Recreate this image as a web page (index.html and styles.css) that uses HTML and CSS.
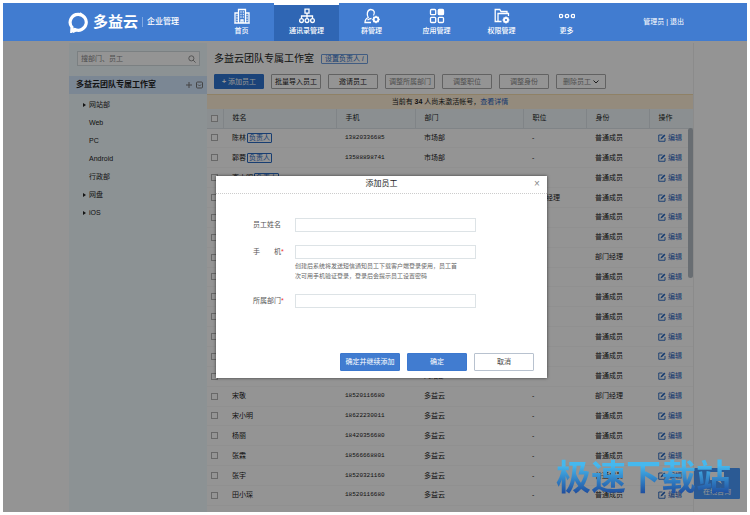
FILE: index.html
```html
<!DOCTYPE html>
<html lang="zh-CN">
<head>
<meta charset="UTF-8">
<meta name="viewport" content="width=device-width, initial-scale=1">
<title>多益云 企业管理</title>
<link rel="stylesheet" href="styles.css">
</head>
<body>
<svg class="sprite" aria-hidden="true">
<symbol id="icon-edit" viewBox="0 0 16 16"><path d="M9 2H1.500v12.500H14V8" fill="none" stroke="currentColor" stroke-width="1.800"/><path d="M5 11l.8-3L12.500 1.200l2.300 2.300L8 10.200z" fill="currentColor"/></symbol>
</svg>
<div class="app">
<header class="topbar">
<div class="logo">
<svg viewBox="0 0 20 20"><path d="M10 2.200a7.600 7.600 0 1 1-3.600 14.400L3.600 18.200l.2-3.600A7.600 7.600 0 0 1 10 2.200z" fill="none" stroke="#fff" stroke-width="3"/><path d="M12 0l3 4-4-1zM3 16l2 4 4-2z" fill="#fff"/></svg>
<span class="logo-name">多益云</span>
<span class="logo-sub">企业管理</span>
</div>
<nav class="nav">
<a href="#">
<svg viewBox="0 0 16 16"><path d="M4.500 15V1.500h7V15M4.500 5H1v10h14V5h-3.500M.2 15.200h15.600M6.500 4h1M8.800 4h1M6.500 6.500h1M8.800 6.500h1M6.500 9h1M8.800 9h1M7 15v-3h2v3M2.500 7.500h1M2.500 10h1M2.500 12.500h1M12.600 7.500h1M12.600 10h1M12.600 12.500h1"/></svg>
首页</a>
<a href="#" class="active">
<svg viewBox="0 0 16 16"><path d="M6 1.200h4v4H6zM8 5.500v5M2.500 10.500V8h11v2.500"/><circle cx="2.500" cy="12.600" r="1.900"/><circle cx="8" cy="12.600" r="1.900"/><circle cx="13.500" cy="12.600" r="1.900"/></svg>
通讯录管理</a>
<a href="#">
<svg viewBox="0 0 16 16"><path d="M7 14.500H1c0-3 1-4 3.200-5C2.500 7 3 1.500 6.800 1.500S11 5 9.500 7.500M3.500 12c1.500-1 2.500-1.500 4-1.500"/><circle cx="12" cy="11.500" r="2.300" stroke-width="1.800"/><path d="M12 7.800v1.400M12 13.800v1.400M8.300 11.500h1.400M14.300 11.500h1.500M9.400 8.900l1 1M13.600 13.100l1 1M14.600 8.900l-1 1M10.400 13.100l-1 1"/></svg>
群管理</a>
<a href="#">
<svg viewBox="0 0 16 16"><rect x="1.500" y="1.500" width="5.200" height="5.200" rx="1"/><rect x="9.300" y="1.500" width="5.200" height="5.200" rx="1" fill="#fff"/><rect x="1.500" y="9.300" width="5.200" height="5.200" rx="1"/><rect x="9.300" y="9.300" width="5.200" height="5.200" rx="1"/></svg>
应用管理</a>
<a href="#">
<svg viewBox="0 0 16 16"><path d="M7.500 13.500H1.200V1.500h4.600l1.200 2h6V6M4 13.500v-8h10.500V8"/><circle cx="12" cy="12" r="2" stroke-width="1.800"/><path d="M12 8.600v1.200M12 14.200v1.200M8.600 12h1.200M14.200 12h1.200M9.600 9.600l.8.8M13.600 13.600l.8.8M14.400 9.600l-.8.8M10.400 13.600l-.8.8"/></svg>
权限管理</a>
<a href="#">
<svg viewBox="0 0 16 16"><circle cx="2" cy="8" r="1.700"/><circle cx="8" cy="8" r="1.700"/><circle cx="14" cy="8" r="1.700"/></svg>
更多</a>
</nav>
<div class="account"><a href="#">管理员</a> | <a href="#">退出</a></div>
</header>

<div class="workspace">
<div class="panel">
<aside class="sidebar">
<div class="search">
<input type="text" placeholder="搜部门、员工" aria-label="搜部门、员工">
<svg viewBox="0 0 10 10"><circle cx="4.200" cy="4.200" r="3.200"/><path d="M6.500 6.500L9.500 9.500"/></svg>
</div>
<div class="team">
<span>多益云团队专属工作室</span>
<svg viewBox="0 0 18 8"><path d="M4 1v6M1 4h6"/><rect x="11.500" y="1" width="6" height="6" rx="1"/><path d="M13 3.500l1.500 1.500 1.500-1.500"/></svg>
</div>
<ul class="tree">
<li class="parent"><a href="#">网站部</a></li>
<li><a href="#">Web</a></li>
<li><a href="#">PC</a></li>
<li><a href="#">Android</a></li>
<li><a href="#">行政部</a></li>
<li class="parent"><a href="#">网盘</a></li>
<li class="parent"><a href="#">iOS</a></li>
</ul>
</aside>

<main class="content">
<div class="title">
<h1>多益云团队专属工作室</h1>
<button class="owner-btn">设置负责人 <i>i</i></button>
</div>
<div class="toolbar">
<button class="primary"><b>+</b> 添加员工</button>
<button>批量导入员工</button>
<button>邀请员工</button>
<button class="muted">调整所属部门</button>
<button class="muted">调整职位</button>
<button class="muted">调整身份</button>
<button class="muted">删除员工 <svg viewBox="0 0 6 4"><path d="M.5.5L3 3 5.500.5"/></svg></button>
</div>
<p class="notice">当前有 <b>34</b> 人尚未激活帐号，<a href="#">查看详情</a></p>
<div class="list">
<table>
<thead>
<tr><th class="check"><input type="checkbox" aria-label="全选"></th><th class="name">姓名</th><th class="phone">手机</th><th class="dept">部门</th><th class="post">职位</th><th class="role">身份</th><th>操作</th></tr>
</thead>
<tbody>
<tr><td class="check"><input type="checkbox" aria-label="陈林"></td><td>陈林<span class="tag">负责人</span></td><td class="num">13820336685</td><td>市场部</td><td>-</td><td>普通成员</td><td><a href="#"><svg><use href="#icon-edit"/></svg>编辑</a></td></tr>
<tr><td class="check"><input type="checkbox" aria-label="郭蓉"></td><td>郭蓉<span class="tag">负责人</span></td><td class="num">13588898741</td><td>市场部</td><td>-</td><td>普通成员</td><td><a href="#"><svg><use href="#icon-edit"/></svg>编辑</a></td></tr>
<tr><td class="check"><input type="checkbox" aria-label="选择"></td><td>李小明<span class="tag">负责人</span></td><td></td><td></td><td></td><td>普通成员</td><td><a href="#"><svg><use href="#icon-edit"/></svg>编辑</a></td></tr>
<tr><td class="check"><input type="checkbox" aria-label="选择"></td><td></td><td></td><td></td><td>项目经理</td><td>普通成员</td><td><a href="#"><svg><use href="#icon-edit"/></svg>编辑</a></td></tr>
<tr><td class="check"><input type="checkbox" aria-label="选择"></td><td></td><td></td><td></td><td>-</td><td>普通成员</td><td><a href="#"><svg><use href="#icon-edit"/></svg>编辑</a></td></tr>
<tr><td class="check"><input type="checkbox" aria-label="选择"></td><td></td><td></td><td></td><td>-</td><td>普通成员</td><td><a href="#"><svg><use href="#icon-edit"/></svg>编辑</a></td></tr>
<tr><td class="check"><input type="checkbox" aria-label="选择"></td><td></td><td></td><td></td><td>-</td><td>部门经理</td><td><a href="#"><svg><use href="#icon-edit"/></svg>编辑</a></td></tr>
<tr><td class="check"><input type="checkbox" aria-label="选择"></td><td></td><td></td><td></td><td>-</td><td>普通成员</td><td><a href="#"><svg><use href="#icon-edit"/></svg>编辑</a></td></tr>
<tr><td class="check"><input type="checkbox" aria-label="选择"></td><td></td><td></td><td></td><td>-</td><td>普通成员</td><td><a href="#"><svg><use href="#icon-edit"/></svg>编辑</a></td></tr>
<tr><td class="check"><input type="checkbox" aria-label="选择"></td><td></td><td></td><td></td><td>-</td><td>普通成员</td><td><a href="#"><svg><use href="#icon-edit"/></svg>编辑</a></td></tr>
<tr><td class="check"><input type="checkbox" aria-label="选择"></td><td></td><td></td><td></td><td>-</td><td>普通成员</td><td><a href="#"><svg><use href="#icon-edit"/></svg>编辑</a></td></tr>
<tr><td class="check"><input type="checkbox" aria-label="选择"></td><td></td><td></td><td></td><td>-</td><td>普通成员</td><td><a href="#"><svg><use href="#icon-edit"/></svg>编辑</a></td></tr>
<tr><td class="check"><input type="checkbox" aria-label="选择"></td><td></td><td></td><td>网站部</td><td>-</td><td>普通成员</td><td><a href="#"><svg><use href="#icon-edit"/></svg>编辑</a></td></tr>
<tr><td class="check"><input type="checkbox" aria-label="宋敬"></td><td>宋敬</td><td class="num">18520116680</td><td>多益云</td><td>-</td><td>部门经理</td><td><a href="#"><svg><use href="#icon-edit"/></svg>编辑</a></td></tr>
<tr><td class="check"><input type="checkbox" aria-label="宋小明"></td><td>宋小明</td><td class="num">18622230011</td><td>多益云</td><td>-</td><td>普通成员</td><td><a href="#"><svg><use href="#icon-edit"/></svg>编辑</a></td></tr>
<tr><td class="check"><input type="checkbox" aria-label="杨丽"></td><td>杨丽</td><td class="num">18420356680</td><td>多益云</td><td>-</td><td>普通成员</td><td><a href="#"><svg><use href="#icon-edit"/></svg>编辑</a></td></tr>
<tr><td class="check"><input type="checkbox" aria-label="张霖"></td><td>张霖</td><td class="num">18566668801</td><td>多益云</td><td>-</td><td>普通成员</td><td><a href="#"><svg><use href="#icon-edit"/></svg>编辑</a></td></tr>
<tr><td class="check"><input type="checkbox" aria-label="张宇"></td><td>张宇</td><td class="num">18520321160</td><td>多益云</td><td>-</td><td>普通成员</td><td><a href="#"><svg><use href="#icon-edit"/></svg>编辑</a></td></tr>
<tr><td class="check"><input type="checkbox" aria-label="田小琛"></td><td>田小琛</td><td class="num">18520116680</td><td>多益云</td><td>-</td><td>普通成员</td><td><a href="#"><svg><use href="#icon-edit"/></svg>编辑</a></td></tr>
</tbody>
</table>
<div class="scrollbar"></div>
</div>
</main>
</div>

<button class="support">
<svg viewBox="0 0 16 14"><path d="M1 1h14v8h-4l2 4-6-4H1z"/></svg>
在线咨询
</button>

<div class="mask">
<form class="modal">
<div class="modal-head">
<h2>添加员工</h2>
<button type="button" class="close" aria-label="关闭">×</button>
</div>
<div class="fields">
<label for="staff-name">员工姓名</label>
<input id="staff-name" type="text">
<label for="staff-phone">手&emsp;&emsp;机<em>*</em></label>
<div>
<input id="staff-phone" type="text">
<p class="note">创建后系统将发送短信通知员工下载客户端登录使用，员工首<br>次可用手机验证登录，登录后会提示员工设置密码</p>
</div>
<label for="staff-dept">所属部门<em>*</em></label>
<input id="staff-dept" type="text">
</div>
<div class="actions">
<button type="button" class="ok">确定并继续添加</button>
<button type="button" class="ok">确定</button>
<button type="button" class="cancel">取消</button>
</div>
</form>
</div>
<div class="watermark">极速下载站</div>
</div>
</div>
</body>
</html>
```
FILE: styles.css
```css
* {
  box-sizing: border-box;
}
body {
  margin: 0;
  padding: 3px;
  background: #fff;
  font-family: "Liberation Sans", "Noto Sans CJK SC", sans-serif;
  font-size: 7px;
  line-height: 10px;
  color: #222;
}
button, input {
  font-family: inherit;
  font-size: 7px;
  line-height: 10px;
  margin: 0;
}
button {
  padding: 0;
  cursor: pointer;
}
a {
  color: inherit;
  text-decoration: none;
}
h1, h2, p, ul {
  margin: 0;
  padding: 0;
}
.sprite {
  position: absolute;
  width: 0;
  height: 0;
}
.app {
  display: flex;
  flex-direction: column;
  height: calc(100vh - 6px);
  overflow: hidden;
}

/* top bar */
.topbar {
  display: flex;
  align-items: center;
  flex: none;
  height: 38px;
  padding: 0 63px 0 65px;
  background: #417cd0;
  color: #fff;
}
.logo {
  display: flex;
  align-items: center;
  width: 141px;
}
.logo svg {
  width: 21px;
  height: 21px;
  margin-right: 4px;
}
.logo-name {
  font-size: 15px;
  line-height: 20px;
  font-weight: bold;
}
.logo-sub {
  margin-left: 4px;
  padding-left: 4px;
  border-left: 1px solid #7fa8e2;
  font-size: 8px;
  font-weight: 500;
}
.nav {
  display: flex;
  align-self: stretch;
}
.nav a {
  display: flex;
  flex-direction: column;
  align-items: center;
  gap: 2px;
  width: 65px;
  padding-top: 5px;
  font-weight: 500;
}
.nav .active {
  padding-top: 3px;
  border-top: 2px solid #fff;
  background: #2f66b4;
}
.nav svg {
  width: 16px;
  height: 16px;
  fill: none;
  stroke: #fff;
  stroke-width: 1.3;
}
.account {
  margin-left: auto;
  white-space: nowrap;
}

/* page body */
.workspace {
  position: relative;
  flex: 1;
  min-height: 0;
  padding: 2px 53px 0 66px;
  background: #fff;
}
.panel {
  display: flex;
  height: 100%;
  border-right: 1px solid #f0f0f0;
}
.sidebar {
  flex: none;
  width: 138px;
  background: #f2fcff;
}
.search {
  display: flex;
  align-items: center;
  height: 15px;
  margin: 8px 7px 10px 8px;
  padding: 0 3px;
  border: 1px solid #d5dde0;
  background: #fff;
}
.search input {
  flex: 1;
  min-width: 0;
  padding: 0;
  border: 0;
  background: none;
  outline: none;
}
.search input::placeholder {
  color: #888;
}
.search svg {
  width: 8px;
  height: 8px;
  fill: none;
  stroke: #777;
}
.team {
  display: flex;
  align-items: center;
  justify-content: space-between;
  height: 18px;
  padding: 0 4px 0 7px;
  background: #d4e8ff;
  font-size: 8px;
  font-weight: bold;
}
.team svg {
  width: 18px;
  height: 8px;
  fill: none;
  stroke: #777;
}
.tree {
  padding-top: 2px;
  list-style: none;
}
.tree li {
  display: flex;
  align-items: center;
  height: 18px;
  padding-left: 20px;
}
.tree .parent {
  padding-left: 14px;
}
.tree .parent::before {
  content: "";
  margin-right: 3px;
  border: 2px solid transparent;
  border-left: 3px solid #222;
  border-right: 0;
}
.content {
  display: flex;
  flex-direction: column;
  flex: 1;
  min-width: 0;
}
.title {
  display: flex;
  align-items: center;
  gap: 7px;
  height: 31px;
  padding-left: 7px;
}
.title h1 {
  font-size: 10px;
  line-height: 14px;
  font-weight: normal;
}
.owner-btn {
  height: 10px;
  padding: 0 3px;
  border: 1px solid #6f9fe0;
  border-radius: 1px;
  background: none;
  color: #2a6bc4;
  line-height: 8px;
}
.toolbar {
  display: flex;
  gap: 7px;
  padding: 0 0 5px 7px;
}
.toolbar button {
  width: 50px;
  height: 15px;
  border: 1px solid #aaa;
  border-radius: 1px;
  background: #fff;
  color: #222;
  white-space: nowrap;
}
.toolbar .primary {
  border-color: #2f74d0;
  background: #2f74d0;
  color: #fff;
}
.toolbar .muted {
  color: #888;
}
.toolbar svg {
  width: 6px;
  height: 4px;
  fill: none;
  stroke: #333;
}
.notice {
  height: 15px;
  border-top: 1px solid #f7dfb0;
  background: #fff0d8;
  line-height: 14px;
  text-align: center;
}
.notice a {
  color: #1f62c0;
}
.list {
  position: relative;
}
.list table {
  width: 100%;
  height: 397px;
  border-collapse: collapse;
  table-layout: fixed;
}
.list th, .list td {
  height: 19px;
  padding: 0 0 0 9px;
  text-align: left;
  white-space: nowrap;
}
.list th {
  border-left: 1px solid #dce4e8;
  border-bottom: 1px solid #dce4e8;
  background: #eff7fa;
  font-weight: normal;
}
.list td {
  border-bottom: 1px solid #f9f9f9;
}
.list th.check, .list td.check {
  width: 16px;
  padding-left: 4px;
  border-left: 0;
}
.name {
  width: 113px;
}
.phone {
  width: 79px;
}
.dept {
  width: 108px;
}
.post {
  width: 63px;
}
.role {
  width: 63px;
}
.list input {
  display: block;
  width: 7px;
  height: 7px;
  appearance: none;
  border: 1px solid #b4b4b4;
  background: #fff;
}
.list .num {
  font-family: "Liberation Mono", monospace;
  font-size: 6px;
}
.list td a {
  display: flex;
  align-items: center;
  gap: 2px;
  color: #1f62c0;
}
.list td svg {
  width: 8px;
  height: 8px;
}
.tag {
  display: inline-block;
  margin-left: 1px;
  padding: 0 1px;
  border: 1px solid #2a6bc4;
  border-radius: 1px;
  color: #2a6bc4;
  line-height: 8px;
}
.scrollbar {
  position: absolute;
  top: 19px;
  right: 0;
  width: 5px;
  height: 150px;
  border-radius: 3px;
  background: #b4bcc4;
}
.support {
  position: absolute;
  right: 7px;
  bottom: 13px;
  width: 46px;
  height: 31px;
  border: 0;
  border-radius: 1px;
  background: #4a9cff;
  color: #fff;
}
.support svg {
  display: block;
  width: 16px;
  height: 14px;
  margin: 0 auto 2px;
  fill: #fff;
}

/* dialog */
.mask {
  position: absolute;
  inset: 0;
  display: flex;
  align-items: center;
  justify-content: center;
  padding: 0 53px 0 66px;
  background: rgba(0, 0, 0, 0.42);
}
.modal {
  width: 331px;
  background: #fff;
  box-shadow: 0 0 3px rgba(0, 0, 0, 0.6);
}
.modal-head {
  display: flex;
  align-items: center;
  height: 18px;
  padding: 0 6px 0 14px;
  border-bottom: 1px dotted #ccc;
}
.modal-head h2 {
  flex: 1;
  font-size: 8px;
  font-weight: normal;
  text-align: center;
}
.close {
  width: 8px;
  border: 0;
  background: none;
  color: #888;
  font-size: 10px;
}
.fields {
  display: grid;
  grid-template-columns: 42px 181px;
  row-gap: 13px;
  padding: 24px 0 45px 37px;
}
.fields label {
  line-height: 14px;
  color: #555;
}
.fields em {
  color: #e33;
  font-style: normal;
}
.fields input {
  display: block;
  width: 100%;
  height: 14px;
  padding: 0 4px;
  border: 1px solid #dde3e6;
  background: #fff;
}
.note {
  padding-top: 2px;
  color: #666;
  font-size: 6px;
  white-space: nowrap;
}
.actions {
  display: flex;
  justify-content: flex-end;
  gap: 7px;
  padding: 0 13px 7px 0;
}
.actions button {
  width: 60px;
  height: 18px;
  border: 1px solid #3c78cf;
  border-radius: 1px;
}
.ok {
  background: #417cd0;
  color: #fff;
}
.actions .cancel {
  border-color: #b8c2cf;
  background: #fff;
  color: #444;
}
.watermark {
  position: absolute;
  right: 16px;
  bottom: 9px;
  background: linear-gradient(#46b8ee 25%, #1f4f9f 80%);
  background-clip: text;
  -webkit-background-clip: text;
  color: transparent;
  font-size: 35px;
  line-height: 50px;
  font-weight: bold;
}
```
